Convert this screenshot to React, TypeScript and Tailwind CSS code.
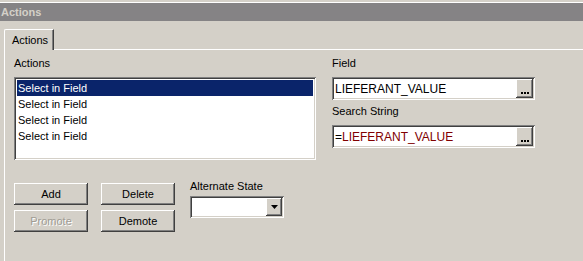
import React from "react";

const raised =
  "bg-[#d4d0c8] shadow-[inset_-1px_-1px_#404040,inset_1px_1px_#ffffff,inset_-2px_-2px_#808080,inset_2px_2px_#d4d0c8]";
const sunken =
  "bg-white shadow-[inset_1px_1px_#808080,inset_-1px_-1px_#ffffff,inset_2px_2px_#404040,inset_-2px_-2px_#d4d0c8]";

function Button({ label, disabled }: { label: string; disabled?: boolean }) {
  return (
    <div
      className={`${raised} w-[74px] h-[22px] flex items-center justify-center text-[11px] ${
        disabled ? "text-[#a09c94] [text-shadow:1px_1px_#ffffff]" : "text-black"
      }`}
    >
      {label}
    </div>
  );
}

function BrowseInput({ children }: { children: React.ReactNode }) {
  return (
    <div className={`${sunken} w-[203px] h-[23px] flex items-center pl-[3px] pr-[2px]`}>
      <div className="flex-1 text-[12px] leading-[16px] whitespace-nowrap">{children}</div>
      <div className={`${raised} w-[17px] h-[19px] flex items-end justify-center pb-[4px] gap-[1px]`}>
        <span className="w-[2px] h-[2px] bg-black" />
        <span className="w-[2px] h-[2px] bg-black" />
        <span className="w-[2px] h-[2px] bg-black" />
      </div>
    </div>
  );
}

export default function App() {
  const items = ["Select in Field", "Select in Field", "Select in Field", "Select in Field"];

  return (
    <div
      className="w-[583px] h-[261px] overflow-hidden bg-[#d4d0c8] flex flex-col text-black"
      style={{ fontFamily: '"Liberation Sans", Arial, sans-serif' }}
    >
      <div className="h-[2px] shrink-0" />
      <div className="h-[1px] bg-white shrink-0" />
      <div className="h-[18px] bg-[#858385] shrink-0 pl-[1px] text-[11px] font-bold leading-[18px] text-[#d4d0c8]">
        Actions
      </div>

      <div className="flex items-end h-[29px] shrink-0 pl-[4px]">
        <div className="h-[21px] w-[50px] border-l border-t border-white rounded-tl-[2px] shadow-[inset_-1px_0_#808080] border-r border-r-[#404040] flex items-center pl-[7px] text-[11px]">
          Actions
        </div>
        <div className="flex-1 border-b border-white" />
      </div>

      <div className="flex-1 ml-[4px] border-l border-white flex pl-[9px]">
        <div className="w-[302px] flex flex-col">
          <div className="mt-[6px] h-[14px] text-[11px] leading-[14px]">Actions</div>
          <div className={`${sunken} mt-[7px] h-[83px] p-[3px] pl-[3px] flex flex-col`}>
            {items.map((it, i) => (
              <div
                key={i}
                className={`h-[16px] pl-[1px] text-[11px] leading-[16px] ${
                  i === 0 ? "bg-[#0a246a] text-white" : ""
                }`}
              >
                {it}
              </div>
            ))}
          </div>

          <div className="mt-[19px] flex">
            <div className="flex flex-col gap-[5px] pt-[4px]">
              <Button label="Add" />
              <Button label="Promote" disabled />
            </div>
            <div className="flex flex-col gap-[5px] pt-[4px] ml-[13px]">
              <Button label="Delete" />
              <Button label="Demote" />
            </div>
            <div className="ml-[15px] flex flex-col">
              <div className="h-[14px] text-[11px] leading-[14px]">Alternate State</div>
              <div className={`${sunken} mt-[3px] w-[94px] h-[22px] flex items-center justify-end pr-[2px]`}>
                <div className={`${raised} w-[16px] h-[18px] flex items-center justify-center`}>
                  <svg width="7" height="4" viewBox="0 0 7 4">
                    <path d="M0 0h7L3.5 4z" fill="#000" />
                  </svg>
                </div>
              </div>
            </div>
          </div>
        </div>

        <div className="ml-[16px] w-[203px] flex flex-col">
          <div className="mt-[6px] h-[14px] text-[11px] leading-[14px]">Field</div>
          <div className="mt-[7px]">
            <BrowseInput>LIEFERANT_VALUE</BrowseInput>
          </div>
          <div className="mt-[4px] h-[14px] text-[11px] leading-[14px]">Search String</div>
          <div className="mt-[7px]">
            <BrowseInput>
              =<span className="text-[#800000]">LIEFERANT_VALUE</span>
            </BrowseInput>
          </div>
        </div>
      </div>
    </div>
  );
}
